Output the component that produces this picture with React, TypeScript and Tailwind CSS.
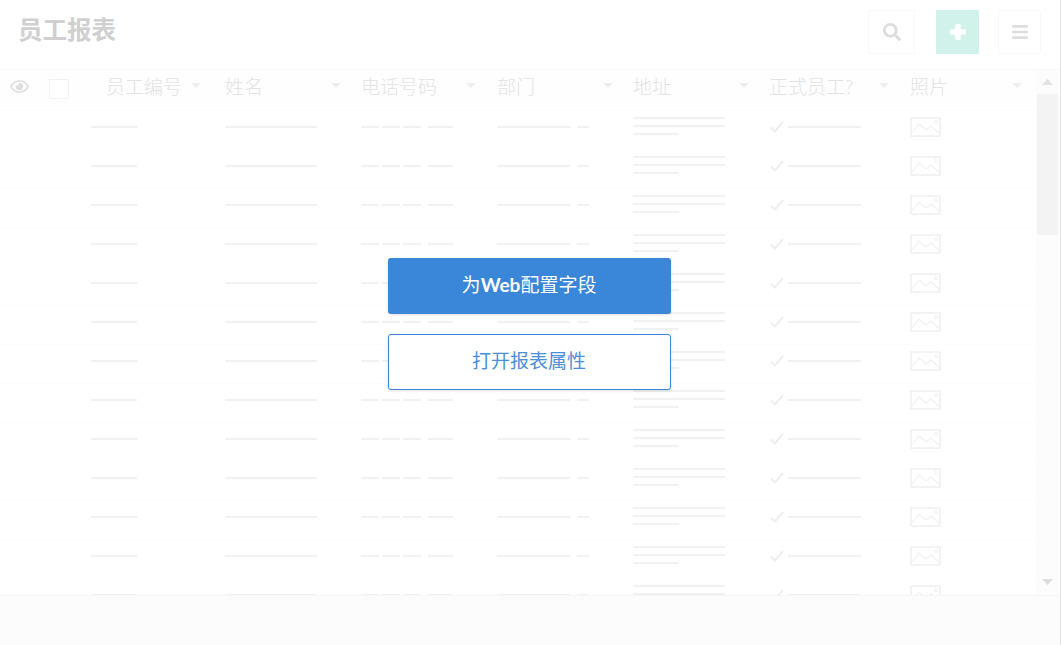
import { FaBars, FaRegEye, FaSearch } from "react-icons/fa";

const fontStack = "font-['Lato','Noto_Sans_CJK_SC',sans-serif]";
const rows = Array.from({ length: 13 }, (_, i) => i);

function Bar({ className }: { className: string }) {
  return <div className={`h-[2px] bg-[#f0f1f1] ${className}`} />;
}

function Caret() {
  return (
    <svg width="10" height="5" viewBox="0 0 10 5" className="shrink-0">
      <path d="M0 0h10L5 5z" fill="#eeeeee" />
    </svg>
  );
}

function HeadCell({ label, pad, caret }: { label: string; pad: string; caret: string }) {
  return (
    <div className={`relative flex h-full items-start pt-[6px] ${pad}`}>
      <span className="text-[19px] font-light leading-[21px] text-[#e3e3e3]">{label}</span>
      <div className={`absolute top-[13px] ${caret}`}>
        <Caret />
      </div>
    </div>
  );
}

function ImageIcon() {
  return (
    <svg width="31" height="20" viewBox="0 0 31 20" fill="none" stroke="#f0f1f1">
      <rect x="1" y="1" width="29" height="18" strokeWidth="1.6" />
      <path d="M2 16l7-9 7 6 5-4 9 8" strokeWidth="1.2" />
      <circle cx="26" cy="5" r="1.6" strokeWidth="1" />
    </svg>
  );
}

function Row() {
  return (
    <div className="grid h-[39px] shrink-0 grid-cols-[91px_134px_137px_135px_136px_136px_141px_120px] items-center border-b border-[#fcfcfc] pt-[2px]">
      <div />
      <Bar className="w-[46px]" />
      <Bar className="w-[92px]" />
      <div className="flex">
        <Bar className="ml-[-1px] w-[18px]" />
        <Bar className="ml-[3px] w-[18px]" />
        <Bar className="ml-[3px] w-[18px]" />
        <Bar className="ml-[7px] w-[25px]" />
      </div>
      <div className="flex gap-[7px]">
        <Bar className="w-[73px]" />
        <Bar className="w-[12px]" />
      </div>
      <div className="mt-[-2px] flex flex-col gap-[6px]">
        <Bar className="w-[92px]" />
        <Bar className="w-[92px]" />
        <Bar className="w-[46px]" />
      </div>
      <div className="flex items-center gap-[4px] pl-[1px]">
        <svg width="14" height="12" viewBox="0 0 14 12" fill="none">
          <path d="M1 6.500l3.800 4L13 1" stroke="#eeeeee" strokeWidth="2" />
        </svg>
        <Bar className="w-[73px]" />
      </div>
      <ImageIcon />
      <div />
    </div>
  );
}

export default function App() {
  return (
    <div className={`relative flex h-[645px] w-[1061px] flex-col overflow-hidden border-r border-[#e4e4e4] bg-white ${fontStack}`}>
      <header className="flex h-[69px] shrink-0 items-start justify-between pl-[19px] pr-[19px] pt-[10px]">
        <h1 className="mt-[5px] ml-[-1px] text-[24.500px] font-bold leading-[30px] text-[#d0d0d0]">员工报表</h1>
        <div className="flex">
          <div className="flex h-[44px] w-[47px] items-center justify-center border border-[#f8f8f8] text-[#dddddd]">
            <FaSearch size={18} />
          </div>
          <div className="ml-[21px] flex h-[44px] w-[43px] items-center justify-center bg-[#d1f2eb] pb-[1px]">
            <svg width="16" height="16" viewBox="0 0 16 16" fill="#ffffff">
              <rect x="5.300" y="0" width="5.400" height="16" rx="1.200" />
              <rect x="0" y="5.300" width="16" height="5.400" rx="1.200" />
            </svg>
          </div>
          <div className="ml-[19px] flex h-[44px] w-[43px] items-center justify-center border border-[#f8f8f8] text-[#dddddd]">
            <FaBars size={18} />
          </div>
        </div>
      </header>

      <div className="flex min-h-0 flex-1 border-t border-[#f8f8f8]">
        <div className="flex w-[1036px] min-w-0 flex-col overflow-hidden">
          <div className="grid h-[41px] shrink-0 grid-cols-[91px_134px_137px_135px_136px_136px_141px_120px] border-b border-[#fbfbfb] bg-[#fefefe]">
            <div className="flex items-start pl-[10px] pt-[7px]">
              <FaRegEye size={19} className="text-[#dedede]" />
              <div className="ml-[20px] mt-[2px] h-[20px] w-[20px] border border-[#f2f2f2] bg-white" />
            </div>
            <HeadCell label="员工编号" pad="pl-[15px]" caret="left-[100px]" />
            <HeadCell label="姓名" pad="" caret="left-[106px]" />
            <HeadCell label="电话号码" pad="ml-[-1px]" caret="left-[105px]" />
            <HeadCell label="部门" pad="" caret="left-[106px]" />
            <HeadCell label="地址" pad="" caret="left-[106px]" />
            <HeadCell label="正式员工?" pad="" caret="left-[110px]" />
            <HeadCell label="照片" pad="" caret="left-[102px]" />
          </div>
          {rows.map((r) => (
            <Row key={r} />
          ))}
        </div>
        <div className="flex w-[23px] shrink-0 flex-col bg-[#fcfcfc]">
          <div className="flex h-[24px] w-full shrink-0 items-center justify-center">
            <svg width="11" height="6" viewBox="0 0 11 6">
              <path d="M0 6h11L5.500 0z" fill="#e2e2e2" />
            </svg>
          </div>
          <div className="ml-[1px] h-[141px] w-[21px] bg-[#f3f3f3]" />
          <div className="flex-1" />
          <div className="mb-[10px] flex justify-center">
            <svg width="11" height="6" viewBox="0 0 11 6">
              <path d="M0 0h11L5.500 6z" fill="#dddddd" />
            </svg>
          </div>
        </div>
      </div>

      <footer className="h-[50px] shrink-0 border-t border-[#f5f5f5] bg-[#fcfcfc]" />

      <div className="absolute inset-0 flex flex-col items-center justify-center gap-[20px] pr-[2px] pt-[3px]">
        <button className="h-[56px] w-[283px] rounded-[3px] bg-[#3a86d9] pb-[2px] text-[19px] text-white shadow-[0_1px_3px_rgba(0,0,0,0.12)]">
          为<span className="font-bold">Web</span>配置字段
        </button>
        <button className="h-[56px] w-[283px] rounded-[3px] border border-[#3a86d9] bg-white pb-[2px] text-[19px] text-[#4a8fdc] shadow-[0_1px_3px_rgba(0,0,0,0.12)]">
          打开报表属性
        </button>
      </div>
    </div>
  );
}
